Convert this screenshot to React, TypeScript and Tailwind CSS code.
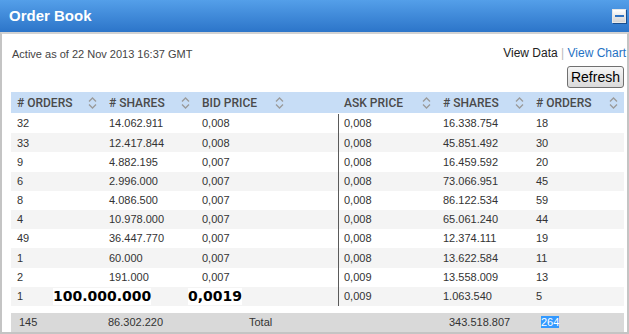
import React from "react";

const bid: [string, string, string][] = [
  ["32", "14.062.911", "0,008"],
  ["33", "12.417.844", "0,008"],
  ["9", "4.882.195", "0,007"],
  ["6", "2.996.000", "0,007"],
  ["8", "4.086.500", "0,007"],
  ["4", "10.978.000", "0,007"],
  ["49", "36.447.770", "0,007"],
  ["1", "60.000", "0,007"],
  ["2", "191.000", "0,007"],
  ["1", "", ""],
];
const ask: [string, string, string][] = [
  ["0,008", "16.338.754", "18"],
  ["0,008", "45.851.492", "30"],
  ["0,008", "16.459.592", "20"],
  ["0,008", "73.066.951", "45"],
  ["0,008", "86.122.534", "59"],
  ["0,008", "65.061.240", "44"],
  ["0,008", "12.374.111", "19"],
  ["0,008", "13.622.584", "11"],
  ["0,009", "13.558.009", "13"],
  ["0,009", "1.063.540", "5"],
];

function Sort() {
  return (
    <svg width="9" height="12" viewBox="0 0 9 12" className="shrink-0">
      <path d="M1 4.5 L4.5 1 L8 4.5" fill="none" stroke="#9a9a9a" strokeWidth="1.3" />
      <path d="M1 7.5 L4.5 11 L8 7.5" fill="none" stroke="#9a9a9a" strokeWidth="1.3" />
    </svg>
  );
}

function H({ label, w }: { label: string; w: string }) {
  return (
    <div className={`${w} flex items-center justify-between pl-[6px] pr-[6px]`}>
      <span>{label}</span>
      <Sort />
    </div>
  );
}

export default function App() {
  return (
    <div
      className="w-[629px] h-[334px] bg-white overflow-hidden"
      style={{ fontFamily: '"Liberation Sans", Arial, sans-serif' }}
    >
      <div className="h-[32px] bg-gradient-to-b from-[#549fe9] to-[#2c75c9] flex items-center justify-between pl-[9px] pr-[3px]">
        <span className="text-white font-bold text-[15px]">Order Book</span>
        <div className="relative w-[14px] h-[14px] mb-[1px]">
          <div className="absolute left-[1px] top-[1px] w-[14px] h-[14px] bg-[#1b4f8e]" />
          <div className="absolute left-0 top-0 w-[14px] h-[14px] bg-gradient-to-b from-white to-[#d4d4d4] border border-[#e8e8e8] flex items-center justify-center">
            <div className="w-[9px] h-[2px] bg-[#2e73c4]" />
          </div>
        </div>
      </div>
      <div className="h-[302px] border-t-2 border-[#d2d2d2] border-l-2 border-r-2 border-b-2 border-l-[#c4c4c4] border-r-[#c4c4c4] border-b-[#c4c4c4] flex flex-col">
        <div className="flex justify-between items-start pt-[10px] pl-[10px] pr-[1px] h-[30px]">
          <span className="text-[11px] text-[#444] mt-[2px]">Active as of 22 Nov 2013 16:37 GMT</span>
          <span className="text-[12px]">
            <span className="text-[#222]">View Data</span>
            <span className="text-[#bbb]"> | </span>
            <span className="text-[#1f72c4]">View Chart</span>
          </span>
        </div>
        <div className="flex justify-end pr-[3px] h-[25px] pt-[2px]">
          <button className="h-[22px] px-[3px] text-[14px] text-black border border-[#707070] rounded-[3px] bg-gradient-to-b from-[#f6f6f6] to-[#dadada] leading-none">
            Refresh
          </button>
        </div>
        <div className="ml-[9px] w-[613px] mt-[3px]">
          <div
            className="h-[21px] bg-[#c7ddf6] flex text-[12px] font-medium text-[#4a4a4a]"
            style={{ fontFamily: 'Roboto, "Liberation Sans", sans-serif' }}
          >
            <H label="# ORDERS" w="w-[92px]" />
            <H label="# SHARES" w="w-[93px]" />
            <H label="BID PRICE" w="w-[94px]" />
            <div className="w-[48px]" />
            <H label="ASK PRICE" w="w-[99px]" />
            <H label="# SHARES" w="w-[93px]" />
            <H label="# ORDERS" w="w-[94px]" />
          </div>
          <div className="text-[11px] text-[#333] pt-[1px]">
            {bid.map((b, i) => {
              const a = ask[i];
              const last = i === 9;
              return (
                <div
                  key={i}
                  className={`h-[19.2px] flex items-center ${i % 2 === 1 ? "bg-[#f4f4f4]" : "bg-white"}`}
                >
                  <div className="w-[92px] pl-[6px]">{b[0]}</div>
                  <div className="w-[93px] pl-[6px] whitespace-nowrap">
                    {last ? (
                      <span
                        className="-ml-[56px] bg-white font-bold text-[14px] text-black leading-[17px] inline-block"
                        style={{ fontFamily: '"DejaVu Sans", Verdana, sans-serif' }}
                      >
                        100.000.000
                      </span>
                    ) : (
                      b[1]
                    )}
                  </div>
                  <div className="w-[94px] pl-[6px] whitespace-nowrap">
                    {last ? (
                      <span
                        className="-ml-[14px] bg-white font-bold text-[14px] text-black leading-[17px] inline-block"
                        style={{ fontFamily: '"DejaVu Sans", Verdana, sans-serif' }}
                      >
                        0,0019
                      </span>
                    ) : (
                      b[2]
                    )}
                  </div>
                  <div className="w-[48px]" />
                  <div className="w-[99px] h-full flex items-center pl-[5px] border-l-[1.5px] border-[#5a5a5a]">{a[0]}</div>
                  <div className="w-[93px] pl-[6px]">{a[1]}</div>
                  <div className="w-[94px] pl-[6px]">{a[2]}</div>
                </div>
              );
            })}
          </div>
          <div className="h-[7px]" />
          <div className="h-[19px] bg-[#d9d9d9] flex items-center text-[11px] text-[#333]">
            <div className="w-[97px] pl-[8px]">145</div>
            <div className="w-[141px]">86.302.220</div>
            <div className="w-[200px]">Total</div>
            <div className="w-[92px]">343.518.807</div>
            <div>
              <span className="bg-[#3399ff] text-white">264</span>
            </div>
          </div>
        </div>
      </div>
    </div>
  );
}
